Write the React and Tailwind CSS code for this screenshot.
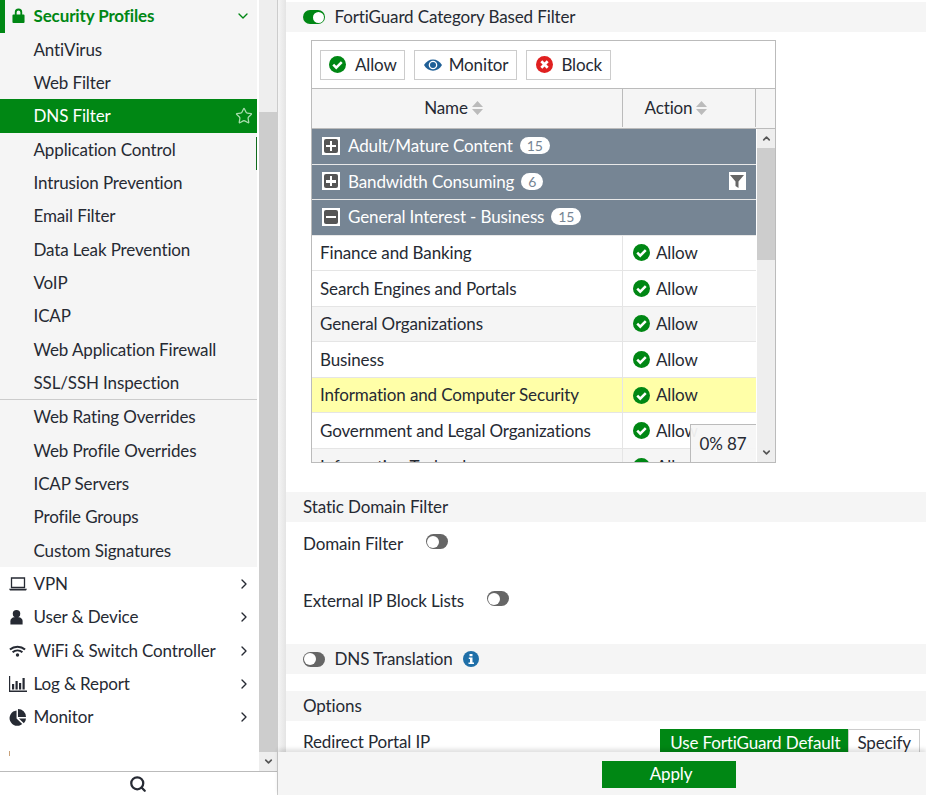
import React from "react";
import { ChevronDown, ChevronRight, ChevronUp, Star, Search } from "lucide-react";

const Check = () => (
  <svg viewBox="0 0 16 16" className="w-[17px] h-[17px] shrink-0">
    <circle cx="8" cy="8" r="8" fill="#008714" />
    <path d="M4 8.2l2.8 2.8L12 5.8" fill="none" stroke="#fff" strokeWidth="2.4" />
  </svg>
);
const Toggle = ({ on }) =>
  on ? (
    <span className="inline-flex items-center justify-end w-[22px] h-[14px] rounded-full bg-[#008714] pr-[1px] shrink-0">
      <span className="w-[11px] h-[11px] rounded-full bg-white" />
    </span>
  ) : (
    <span className="inline-flex items-center w-[22px] h-[15px] rounded-full bg-[#666] pl-[1px] shrink-0">
      <span className="w-[12px] h-[12px] rounded-full bg-white" />
    </span>
  );
const Sort = () => (
  <svg viewBox="0 0 11 14" className="w-[11px] h-[14px]">
    <path d="M5.5 0L11 6H0z M0 8h11l-5.5 6z" fill="#bbb" />
  </svg>
);
const Box = ({ plus }) => (
  <span className="w-[18px] h-[18px] bg-white flex items-center justify-center shrink-0">
    <span className="w-[14px] h-[14px] bg-[#555] rounded-[2px] relative flex items-center justify-center">
      <span className="w-[10px] h-[2.5px] bg-white" />
      {plus && <span className="absolute w-[2.5px] h-[10px] bg-white" />}
    </span>
  </span>
);
const Group = ({ plus, label, n, filter }) => (
  <div className="h-[35.5px] bg-[#768594] border-b border-[#e8e8e8] flex items-center pl-[10px] pr-[10px] pb-[0.6px] text-white shrink-0">
    <Box plus={plus} />
    <span className="ml-[8px]">{label}</span>
    <span className="ml-[7px] px-[7px] h-[17px] rounded-full bg-white text-[#768594] text-[14px] leading-[17px]">{n}</span>
    {filter && (
      <span className="ml-auto w-[17px] h-[18px] bg-white flex items-center justify-center">
        <svg viewBox="0 0 14 14" className="w-[14px] h-[14px]"><path d="M0 1h14L8.5 7.5V14l-3-2V7.5z" fill="#666" /></svg>
      </span>
    )}
  </div>
);
const Row = ({ name, alt, hl }) => (
  <div className={"flex h-[35.6px] shrink-0 border-b border-[#e5e5e5] " + (hl ? "bg-[#ffffa8]" : alt ? "bg-[#f5f5f5]" : "bg-white")}>
    <div className="w-[311px] pl-[8px] flex items-center border-r border-[#e5e5e5]">{name}</div>
    <div className="flex-1 pl-[10px] flex items-center gap-[6px]"><Check />Allow</div>
  </div>
);
const Item = ({ label, active }) => (
  <div className={"h-[33.33px] pl-[33.5px] flex items-center shrink-0 " + (active ? "bg-[#008714] text-white" : "")}>
    {label}
    {active && <Star className="ml-auto mr-[4px] w-[18px] h-[18px] text-[#a8dcae]" strokeWidth={1.7} />}
  </div>
);
const Nav = ({ icon, label }) => (
  <div className="h-[33.33px] flex items-center shrink-0">
    <span className="w-[33.5px] pl-[9px] flex items-center">{icon}</span>
    {label}
    <ChevronRight className="ml-auto mr-[5px] w-[16px] h-[16px]" strokeWidth={2} />
  </div>
);
const Section = ({ children, className = "" }) => (
  <div className={"h-[30px] bg-[#f5f5f5] flex items-center pl-[17px] shrink-0 " + className}>{children}</div>
);

export default function App() {
  return (
    <div className="w-[926px] h-[795px] flex overflow-hidden bg-white text-[#262a33] text-[17px] tracking-[-0.13px] font-['Lato','Open_Sans',sans-serif]">
      <aside className="w-[278px] shrink-0 h-full flex flex-col border-r border-[#ccc]">
        <div className="flex-1 min-h-0 flex">
          <div className="w-[257px] flex flex-col overflow-hidden relative">
            <span className="absolute right-0 top-[137px] w-[1px] h-[33px] bg-[#0f6b1c]" />
            <span className="absolute left-[9px] top-[751px] w-[1px] h-[5px] bg-[#c9a27a]" />
            <div className="bg-[#f5f5f5] flex flex-col shrink-0 pb-[0.25px]">
              <div className="h-[32.75px] flex items-center text-[#008714] font-bold shrink-0 pb-[1px]">
                <span className="w-[5px] h-[33px] -mb-[1px] bg-[#008714]" />
                <svg viewBox="0 0 14 16" className="ml-[7px] w-[13px] h-[15px]"><path d="M3 7V4.5a4 4 0 018 0V7h1.5a1 1 0 011 1v7a1 1 0 01-1 1h-11a1 1 0 01-1-1V8a1 1 0 011-1zM5 7h4V4.5a2 2 0 00-4 0z" fill="#008714" /></svg>
                <span className="ml-[8.5px]">Security Profiles</span>
                <ChevronDown className="ml-auto mr-[6px] w-[16px] h-[16px]" />
              </div>
              {["AntiVirus", "Web Filter"].map((l) => <Item key={l} label={l} />)}
              <Item label="DNS Filter" active />
              {["Application Control", "Intrusion Prevention", "Email Filter", "Data Leak Prevention", "VoIP", "ICAP", "Web Application Firewall", "SSL/SSH Inspection"].map((l) => <Item key={l} label={l} />)}
              <div className="border-t border-[#ccc]" />
              {["Web Rating Overrides", "Web Profile Overrides", "ICAP Servers", "Profile Groups", "Custom Signatures"].map((l) => <Item key={l} label={l} />)}
            </div>
            <Nav label="VPN" icon={<svg viewBox="0 0 18 14" className="w-[18px] h-[14px]"><path d="M2.500 1h13v9.500h-13z" fill="none" stroke="#262a33" strokeWidth="1.300" /><path d="M0 11.800h18l-1 1.700H1z" fill="#262a33" /></svg>} />
            <Nav label="User & Device" icon={<svg viewBox="0 0 16 16" className="w-[15px] h-[16px]"><circle cx="8" cy="4.500" r="4" fill="#262a33" /><path d="M1.500 16v-3.500C1.500 9.500 4 8 8 8s6.500 1.500 6.500 4.500V16z" fill="#262a33" /></svg>} />
            <Nav label="WiFi & Switch Controller" icon={<svg viewBox="0 0 18 12" className="w-[17px] h-[12px]" fill="none" stroke="#262a33" strokeWidth="2.200"><path d="M1 4.500c4.500-4 11.500-4 16 0M3.800 7.400c3-2.500 7.400-2.500 10.400 0" /><circle cx="9" cy="10.200" r="1.800" fill="#262a33" stroke="none" /></svg>} />
            <Nav label="Log & Report" icon={<svg viewBox="0 0 18 16" className="w-[18px] h-[16px]"><path d="M0 0h1.200v14.500H18V16H0z M3 8h2.200v5.500H3z M6.500 5h2.200v8.500H6.500z M10 7h2.200v6.500H10z M13.500 2h2.200v11.500h-2.200z" fill="#262a33" /></svg>} />
            <Nav label="Monitor" icon={<svg viewBox="0 0 18 18" className="w-[17px] h-[17px]"><path d="M8 1.500V10l6 6A8.200 8.200 0 118 1.500z M9.500 0A8.500 8.500 0 0118 8.500H9.500z M10.500 10H18a8.300 8.300 0 01-2.300 5.200z" fill="#262a33" /></svg>} />
          </div>
          <div className="ml-[2px] w-[18px] flex flex-col bg-[#eeeeee]">
            <div className="h-[112px] shrink-0" />
            <div className="flex-1 bg-[#cdcdcd]" />
            <div className="h-[19px] shrink-0 flex items-center justify-center">
              <ChevronDown className="w-[11px] h-[11px] text-[#555]" strokeWidth={3.5} />
            </div>
          </div>
        </div>
        <div className="h-[24px] shrink-0 border-t border-[#bbb] flex items-center justify-center">
          <Search className="w-[18px] h-[18px] -translate-x-[1px]" strokeWidth={3} />
        </div>
      </aside>

      <main className="flex-1 min-w-0 h-full flex flex-col relative">
        <div className="flex-1 min-h-0 flex">
          <div className="w-[8px] bg-linear-to-r from-[#f5f5f5] to-[#e4e4e4] shrink-0" />
          <div className="flex-1 min-w-0 flex flex-col overflow-hidden">
            <Section className="gap-[9.5px] mt-[2px]"><Toggle on /> FortiGuard Category Based Filter</Section>
            <div className="ml-[25px] mt-[8px] w-[465px] h-[423px] border border-[#bbb] flex flex-col shrink-0 relative">
              <div className="h-[48px] border-b border-[#bbb] flex items-center pl-[8px] gap-[9px] shrink-0">
                <button className="h-[30px] pl-[8px] pr-[7px] border border-[#ccc] flex items-center gap-[9px]"><Check />Allow</button>
                <button className="h-[30px] pl-[9px] pr-[8px] border border-[#ccc] flex items-center gap-[7px]">
                  <svg viewBox="0 0 18 12" className="w-[18px] h-[12px]"><path d="M0 6c4-7.500 14-7.500 18 0-4 7.500-14 7.500-18 0z" fill="#1f5f96" /><circle cx="9" cy="6" r="4.300" fill="#fff" /><circle cx="9" cy="6" r="3" fill="#1f5f96" /></svg>
                  Monitor
                </button>
                <button className="h-[30px] pl-[9px] pr-[8px] border border-[#ccc] flex items-center gap-[8px]">
                  <svg viewBox="0 0 16 16" className="w-[17px] h-[17px]"><circle cx="8" cy="8" r="8" fill="#e02020" /><path d="M5 5l6 6M11 5l-6 6" stroke="#fff" strokeWidth="2.600" /></svg>
                  Block
                </button>
              </div>
              <div className="h-[40px] bg-[#f5f5f5] border-b border-[#bbb] flex shrink-0 pb-[1px]">
                <div className="w-[311px] border-r border-[#bbb] flex items-center justify-center gap-[4px] pr-[27px]">Name <Sort /></div>
                <div className="w-[133px] border-r border-[#bbb] flex items-center justify-center gap-[4px] pr-[26px]">Action <Sort /></div>
              </div>
              <div className="flex-1 min-h-0 flex">
                <div className="w-[443.5px] mr-[1.5px] flex flex-col overflow-hidden">
                  <Group plus label="Adult/Mature Content" n="15" />
                  <Group plus label="Bandwidth Consuming" n="6" filter />
                  <Group label="General Interest - Business" n="15" />
                  <Row name="Finance and Banking" />
                  <Row name="Search Engines and Portals" />
                  <Row name="General Organizations" alt />
                  <Row name="Business" />
                  <Row name="Information and Computer Security" hl />
                  <Row name="Government and Legal Organizations" />
                  <Row name="Information Technology" alt />
                </div>
                <div className="flex-1 flex flex-col bg-[#eeeeee]">
                  <div className="h-[19px] shrink-0 flex items-center justify-center"><ChevronUp className="w-[11px] h-[11px] text-[#555]" strokeWidth={3.5} /></div>
                  <div className="h-[112px] bg-[#cdcdcd] shrink-0" />
                  <div className="flex-1" />
                  <div className="h-[19px] shrink-0 flex items-center justify-center"><ChevronDown className="w-[11px] h-[11px] text-[#555]" strokeWidth={3.5} /></div>
                </div>
              </div>
              <div className="absolute right-[19.5px] bottom-0 w-[66px] h-[38px] bg-[#f5f5f5]/95 border-t border-l border-[#bbb] flex items-center justify-center">0% 87</div>
            </div>
            <Section className="mt-[29px]">Static Domain Filter</Section>
            <div className="h-[57px] pl-[17px] pt-[9px] flex items-start gap-[23px] shrink-0"><span>Domain Filter</span><span className="mt-[3px] flex"><Toggle /></span></div>
            <div className="h-[65px] pl-[17px] pt-[9px] flex items-start gap-[23px] shrink-0"><span>External IP Block Lists</span><span className="mt-[3px] flex"><Toggle /></span></div>
            <Section className="gap-[9.5px]">
              <Toggle /> DNS Translation
              <svg viewBox="0 0 16 16" className="ml-[1px] w-[16px] h-[16px]"><circle cx="8" cy="8" r="8" fill="#1f6fa8" /><path d="M6.500 3h3v2.200h-3z M5.800 6.500h3.700v5H11v1.600H5.500v-1.600H7V8H5.800z" fill="#fff" /></svg>
            </Section>
            <Section className="mt-[17px]">Options</Section>
            <div className="flex items-center pl-[17px] pr-[6px] h-[30px] mt-[6px] shrink-0">
              Redirect Portal IP
              <div className="ml-auto flex h-[30px] mt-[4px]">
                <span className="pl-[10px] pr-[8px] pb-[3px] bg-[#008714] text-white flex items-center">Use FortiGuard Default</span>
                <span className="px-[8px] pb-[3px] border border-[#ccc] flex items-center">Specify</span>
              </div>
            </div>
          </div>
        </div>
        <div className="h-[43px] shrink-0 bg-[#f5f5f5] shadow-[0_-3px_4px_rgba(0,0,0,0.12)] z-10 flex items-start pl-[324px] pt-[9px]">
          <button className="w-[134px] h-[27px] bg-[#008714] text-white pl-[4px] pb-[2px]">Apply</button>
        </div>
      </main>
    </div>
  );
}
